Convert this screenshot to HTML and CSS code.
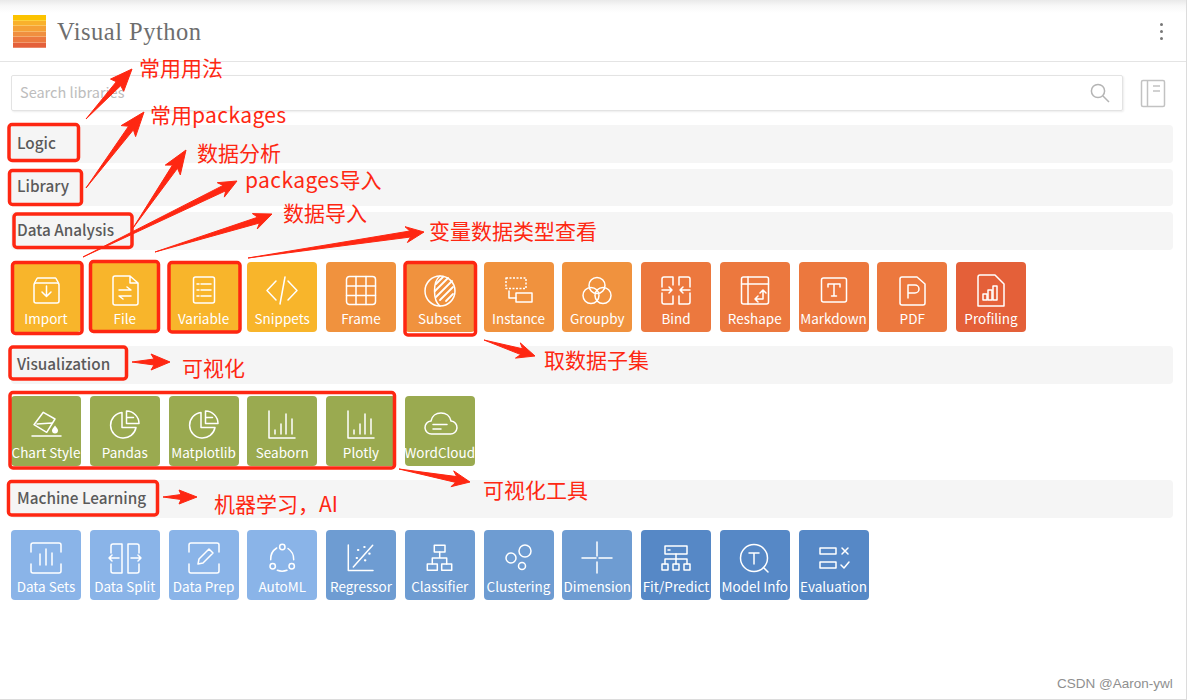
FILE: index.html
```html
<!DOCTYPE html>
<html lang="en">
<head>
<meta charset="utf-8">
<title>Visual Python</title>
<link rel="stylesheet" href="styles.css">
</head>
<body>
<div class="app">
  <header class="topbar">
    <div class="logo"><i class="s1"></i><i class="s2"></i><i class="s3"></i><i class="s4"></i><i class="s5"></i><i class="s6"></i></div>
    <div class="brand">Visual Python</div>
    <div class="kebab"><i></i><i></i><i></i></div>
  </header>
  <main class="content">
    <div class="searchrow">
      <div class="search">
        <input class="search-input" placeholder="Search libraries">
        <svg class="search-ic" width="20" height="20" viewBox="0 0 20 20"><circle cx="8" cy="8" r="6.6"/><path d="M13 13l6 6"/></svg>
      </div>
      <svg class="book" width="26" height="29" viewBox="0 0 26 29"><rect x="1.5" y="1.5" width="23" height="26" rx="1.5"/><path d="M7.5 1.5v26M13 7h7M13 12h7"/></svg>
    </div>

    <div class="bar">Logic</div>
    <div class="bar">Library</div>
    <div class="bar">Data Analysis</div>
    <div class="tiles">
      <div class="tile yellow"><svg class="ic" viewBox="0 0 36 36"><path d="M6.5 11l2.5-4.500a1 1 0 0 1 1-.5h17a1 1 0 0 1 1 .5l2.500 4.500"/><rect x="6" y="11" width="25" height="20" rx="2"/><path d="M18.500 14v10M14 20l4.500 4.500 4.500-4.500"/></svg><span>Import</span></div>
      <div class="tile yellow"><svg class="ic" viewBox="0 0 36 36"><path d="M8 4h15l8 7v20a2 2 0 0 1-2 2H8a2 2 0 0 1-2-2V6a2 2 0 0 1 2-2zM23 4v7h8"/><path d="M12 18h12l-4-3M24 24H12l4 3"/></svg><span>File</span></div>
      <div class="tile yellow"><svg class="ic" viewBox="0 0 36 36"><rect x="7.500" y="5" width="21" height="26" rx="2"/><path d="M11 12h2M15 12h10M11 18h2M15 18h10M11 24h2M15 24h10"/></svg><span>Variable</span></div>
      <div class="tile yellow"><svg class="ic" viewBox="0 0 36 36"><path d="M12 9l-9 9.500 9 9.500M24 9l9 9.500-9 9.500M21 5l-5 27"/></svg><span>Snippets</span></div>
      <div class="tile orange"><svg class="ic" viewBox="0 0 36 36"><rect x="3.500" y="4.500" width="29" height="28" rx="3"/><path d="M13 4.500v28M23 4.500v28M3.500 14h29M3.500 23.500h29"/></svg><span>Frame</span></div>
      <div class="tile orange"><svg class="ic" viewBox="0 0 36 36"><circle cx="18" cy="19" r="15"/><path d="M18 4c-4 3-5.500 9-5.500 15s1.500 12 5.500 15"/><path class="hatch" d="M14 12l7-7M13 19l13-13M14 25L30 9M18 28l13-13M24 29l7-7"/></svg><span>Subset</span></div>
      <div class="tile orange"><svg class="ic" viewBox="0 0 36 36"><rect class="dash" x="5" y="6" width="20" height="10.500"/><rect x="15" y="21" width="16" height="9"/><path d="M8 19v7h7"/></svg><span>Instance</span></div>
      <div class="tile orange"><svg class="ic" viewBox="0 0 36 36"><circle cx="18" cy="13.500" r="8"/><circle cx="12" cy="23.500" r="8"/><circle cx="24" cy="23.500" r="8"/></svg><span>Groupby</span></div>
      <div class="tile deep"><svg class="ic" viewBox="0 0 36 36"><path d="M15 5H6a2 2 0 0 0-2 2v8M4 21v9a2 2 0 0 0 2 2h9v-8M15 5v8M21 5h9a2 2 0 0 1 2 2v8M32 21v9a2 2 0 0 1-2 2h-9v-8M21 5v8M4 18h10M11 15l3 3-3 3M32 18H22M25 15l-3 3 3 3"/></svg><span>Bind</span></div>
      <div class="tile deep"><svg class="ic" viewBox="0 0 36 36"><rect x="4.500" y="5" width="27" height="27" rx="2"/><path d="M4.500 12h27M11 5v27M18 27h8v-9M23 21l3-3 3 3M21 24l-3 3 3 3"/></svg><span>Reshape</span></div>
      <div class="tile deep"><svg class="ic" viewBox="0 0 36 36"><rect x="5.500" y="6" width="25" height="24" rx="2"/><path d="M12 15v-3h12v3M18 12v12M15.500 24h5"/></svg><span>Markdown</span></div>
      <div class="tile deep"><svg class="ic" viewBox="0 0 36 36"><path d="M8 5h15l8 7v19a2 2 0 0 1-2 2H8a2 2 0 0 1-2-2V7a2 2 0 0 1 2-2z"/><path d="M14 26V13h7a3 3 0 0 1 0 8h-7"/></svg><span>PDF</span></div>
      <div class="tile red"><svg class="ic" viewBox="0 0 36 36"><path d="M7 3h15l9 9v22H5V5a2 2 0 0 1 2-2z"/><rect x="10" y="22" width="4" height="6"/><rect x="15" y="18" width="4" height="10"/><rect x="20" y="14" width="4" height="14"/></svg><span>Profiling</span></div>
    </div>

    <div class="bar">Visualization</div>
    <div class="tiles">
      <div class="tile green"><svg class="ic" viewBox="0 0 36 36"><path d="M6 18.700L15.300 6.300 27 13 18.700 26.300zM9 18l15-1"/><path d="M4 30h29"/><path class="solid" d="M27 19.500c-2 2.500-3 3.500-3 5a3 3 0 0 0 6 0c0-1.500-1-2.500-3-5z"/></svg><span>Chart Style</span></div>
      <div class="tile green"><svg class="ic" viewBox="0 0 36 36"><path d="M15 6.500A12.800 12.800 0 1 0 29 21.500H15z"/><path d="M19.500 5v12.500H32A12.500 12.500 0 0 0 19.500 5zM19.500 11.500h7"/></svg><span>Pandas</span></div>
      <div class="tile green"><svg class="ic" viewBox="0 0 36 36"><path d="M15 6.500A12.800 12.800 0 1 0 29 21.500H15z"/><path d="M19.500 5v12.500H32A12.500 12.500 0 0 0 19.500 5zM19.500 11.500h7"/></svg><span>Matplotlib</span></div>
      <div class="tile green"><svg class="ic" viewBox="0 0 36 36"><path d="M5 5v27h26M11 24v4M17 18v10M22 8v20M28 13v15"/></svg><span>Seaborn</span></div>
      <div class="tile green"><svg class="ic" viewBox="0 0 36 36"><path d="M5 5v27h26M11 24v4M17 18v10M22 8v20M28 13v15"/></svg><span>Plotly</span></div>
      <div class="tile green"><svg class="ic" viewBox="0 0 36 36"><path d="M10 28a6.500 6.500 0 0 1-1-13c1-5 5-8 10-8s9 3 10 8a6.500 6.500 0 0 1-1 13z"/><path d="M11 18.500h14M11 23h8"/></svg><span>WordCloud</span></div>
    </div>

    <div class="bar">Machine Learning</div>
    <div class="tiles">
      <div class="tile sky"><svg class="ic" viewBox="0 0 36 36"><path d="M3 12V5a2 2 0 0 1 2-2h26a2 2 0 0 1 2 2v7M3 24v7a2 2 0 0 0 2 2h26a2 2 0 0 0 2-2v-7M12 14v11M18 9v16M24 13v12"/></svg><span>Data Sets</span></div>
      <div class="tile sky"><svg class="ic" viewBox="0 0 36 36"><path d="M4 13V6a2 2 0 0 1 2-2h9v29H6a2 2 0 0 1-2-2v-7M32 13V6a2 2 0 0 0-2-2h-9v29h9a2 2 0 0 0 2-2v-7M2 18h10M5 15l-3 3 3 3M34 18H24M31 15l3 3-3 3"/></svg><span>Data Split</span></div>
      <div class="tile sky"><svg class="ic" viewBox="0 0 36 36"><path d="M3 12V5a2 2 0 0 1 2-2h26a2 2 0 0 1 2 2v7M3 24v7a2 2 0 0 0 2 2h26a2 2 0 0 0 2-2v-7M23 9l4 4-10 10-5 1 1-5z"/></svg><span>Data Prep</span></div>
      <div class="tile sky"><svg class="ic" viewBox="0 0 36 36"><circle cx="18.300" cy="7" r="2.700"/><circle cx="8.700" cy="26.300" r="2.700"/><circle cx="27.700" cy="26.300" r="2.700"/><path d="M6.700 19.700A13 13 0 0 1 12.700 8M29.700 19.700A13 13 0 0 0 24 8.500M13.300 30.300Q18 32 23 30.300"/></svg><span>AutoML</span></div>
      <div class="tile mid"><svg class="ic" viewBox="0 0 36 36"><path d="M5.300 5v25.500H30M10.300 27L29.700 5.300"/><path class="dots" d="M15 10h.3M21.300 7h.3M13.700 18h.3M26.300 13.700h.3M22 20.300h.3"/></svg><span>Regressor</span></div>
      <div class="tile mid"><svg class="ic" viewBox="0 0 36 36"><rect x="12.300" y="5.300" width="10.700" height="6.700"/><rect x="5.300" y="24" width="10" height="6.300"/><rect x="19.700" y="24" width="10" height="6.300"/><path d="M17.700 12v6M10.300 24v-6h14.400v6"/></svg><span>Classifier</span></div>
      <div class="tile mid"><svg class="ic" viewBox="0 0 36 36"><circle cx="24" cy="11" r="6"/><circle cx="10" cy="18" r="5"/><circle cx="21" cy="26" r="3.500"/></svg><span>Clustering</span></div>
      <div class="tile mid"><svg class="ic" viewBox="0 0 36 36"><path d="M18 2v14M18 22v11M3 18h14M20 18h13"/></svg><span>Dimension</span></div>
      <div class="tile blue"><svg class="ic" viewBox="0 0 36 36"><rect x="7" y="6" width="22" height="8"/><path d="M10 10h2M18 14v10M7 24v-5h22v5"/><rect x="4" y="24" width="6" height="6"/><rect x="15" y="24" width="6" height="6"/><rect x="26" y="24" width="6" height="6"/></svg><span>Fit/Predict</span></div>
      <div class="tile blue"><svg class="ic" viewBox="0 0 36 36"><circle cx="17" cy="18" r="13.500"/><path d="M26.500 27.500L31 32M12 13h10M17 13v11"/></svg><span>Model Info</span></div>
      <div class="tile blue"><svg class="ic" viewBox="0 0 36 36"><rect x="4" y="8" width="16" height="6"/><rect x="4" y="22" width="16" height="6"/><path d="M26 8l6 6M32 8l-6 6M25 25l3 3 5-6"/></svg><span>Evaluation</span></div>
    </div>
  </main>

  <svg class="notes" width="1188" height="700" viewBox="0 0 1188 700">
    <g class="arrows">
      <polygon points="86,119 116.300,81.700 110.500,79.100 132,69 123.700,91.300 120.700,85.700"/>
      <polygon points="86,188 128.600,126.200 121.200,125.600 144,112 135.600,136.600 133.400,129.800"/>
      <polygon points="133,228 172.500,165.100 165.300,165.100 186,150 180.300,174.900 177.500,168.300"/>
      <polygon points="83,257 223.100,185.400 217.300,182.700 237,181 224.300,197.100 225.700,190.800"/>
      <polygon points="155,252 257.700,217.200 252.400,213.600 272,214 257.200,229 259.500,223"/>
      <polygon points="248,258 409.800,231 405,226.700 424,232 407.400,242.500 410.600,237"/>
      <polygon points="484,340 522.600,348.800 520.300,342.900 535,356 515.500,358.100 520.800,354.600"/>
      <polygon points="132,362 154,359 151,354 170,362 151,370 154,365"/>
      <polygon points="399,469 456.700,476.600 453.700,470.900 470,482 450.900,486.700 455.700,482.400"/>
      <polygon points="163,497 181,494.500 179,490 197,497 179,504 181,499.500"/>
    </g>
    <g class="boxes">
      <rect x="9" y="124.500" width="69.500" height="36" rx="3"/>
      <rect x="9.500" y="170.500" width="72" height="34" rx="3"/>
      <rect x="14" y="214" width="118" height="33.500" rx="3"/>
      <rect x="12.500" y="262.500" width="69.500" height="71" rx="3"/>
      <rect x="90.500" y="261.500" width="68" height="70" rx="3"/>
      <rect x="169" y="262.500" width="71" height="69.500" rx="3"/>
      <rect x="405" y="262.500" width="70.500" height="72.500" rx="3"/>
      <rect x="10" y="347" width="116.500" height="32" rx="3"/>
      <rect x="10" y="392.500" width="384.500" height="75.500" rx="3"/>
      <rect x="8.500" y="481.500" width="149" height="33.500" rx="3"/>
    </g>
    <g class="labels">
      <text x="139" y="76">常用用法</text>
      <text x="150" y="123">常用<tspan class="latin">packages</tspan></text>
      <text x="197" y="161">数据分析</text>
      <text x="245" y="188"><tspan class="latin">packages</tspan>导入</text>
      <text x="283" y="221">数据导入</text>
      <text x="429" y="239">变量数据类型查看</text>
      <text x="544" y="368">取数据子集</text>
      <text x="182" y="376">可视化</text>
      <text x="483" y="498">可视化工具</text>
      <text x="214" y="512">机器学习，AI</text>
    </g>
    <text class="watermark" x="1057" y="688">CSDN @Aaron-ywl</text>
  </svg>
</div>
</body>
</html>
```
FILE: styles.css
```css
* { box-sizing: border-box; }
html, body { margin: 0; padding: 0; background: #fff; }
.app {
  position: relative;
  width: 1187px;
  height: 700px;
  border-right: 1px solid #dcdcdc;
  border-bottom: 1px solid #dcdcdc;
  overflow: hidden;
  font-family: "Noto Sans CJK KR", "Noto Sans", sans-serif;
}
.topbar {
  height: 62px;
  display: flex;
  align-items: center;
  padding: 2px 0 0 13px;
  border-bottom: 1px solid #e4e4e4;
  background: linear-gradient(#e9e9e9 0, #f8f8f8 6px, #fff 13px);
}
.logo { width: 33px; height: 33px; display: flex; flex-direction: column; }
.logo i { flex: 1; border-bottom: 1px solid rgba(255,255,255,.25); }
.s1 { background: #fcc300; }
.s2 { background: #f9b12c; }
.s3 { background: #f5a136; }
.s4 { background: #f08f3f; }
.s5 { background: #ec793f; }
.s6 { background: #e4603a; }
.brand {
  margin-left: 11px;
  font-family: "Liberation Serif", serif;
  font-size: 24.500px;
  letter-spacing: .5px;
  color: #6e6e6e;
}
.kebab {
  margin-left: auto;
  margin-right: 23px;
  display: flex;
  flex-direction: column;
  gap: 4px;
}
.kebab i { width: 3px; height: 3px; border-radius: 50%; background: #777; }

.content { padding: 13px 13px 0 11px; }
.searchrow { display: flex; align-items: center; margin-bottom: 14px; }
.search {
  width: 1112px;
  height: 36px;
  display: flex;
  align-items: center;
  padding-right: 12px;
  border: 1px solid #e3e3e3;
  border-radius: 2px;
  box-shadow: 1px 1px 2px rgba(0,0,0,.08);
}
.search-input {
  flex: 1;
  height: 100%;
  border: 0;
  outline: 0;
  padding: 0 8px 3px;
  background: transparent;
  font: 14.500px "Noto Sans CJK KR", "Noto Sans", sans-serif;
}
.search-input::placeholder { color: #bdbdbd; opacity: 1; }
.search-ic { fill: none; stroke: #b4b4b4; stroke-width: 1.500; }
.book {
  margin-left: 17px;
  fill: none;
  stroke: #c2c2c2;
  stroke-width: 1.500;
}

.bar {
  height: 37.500px;
  margin-bottom: 6px;
  padding: 0 0 4px 6px;
  display: flex;
  align-items: center;
  background: #f5f5f5;
  border-radius: 4px;
  color: #5a5a5a;
  font-size: 15.300px;
  font-weight: 500;
}
.bar + .tiles { margin-top: 12.500px; }
.tiles { display: flex; gap: 8.750px; margin-bottom: 14px; }
.tile {
  width: 70px;
  height: 70px;
  flex: none;
  border-radius: 4px;
  display: flex;
  flex-direction: column;
  align-items: center;
  padding-top: 10px;
  color: #fff;
}
.tile span {
  height: 20px;
  line-height: 20px;
  font-size: 13.500px;
  white-space: nowrap;
}
.yellow { background: #f8b52b; }
.orange { background: #f0923e; }
.deep { background: #ec783e; }
.red { background: #e46039; }
.green { background: #9aaa50; }
.sky { background: #8ab4e8; }
.mid { background: #6e9cd2; }
.blue { background: #5688c6; }

.ic {
  width: 36px;
  height: 36px;
  flex: none;
  fill: none;
  stroke: #fff;
  stroke-width: 1.500;
  stroke-linecap: round;
  stroke-linejoin: round;
}
.ic .dash { stroke-dasharray: 2 1.500; stroke-linecap: butt; }
.ic .solid { fill: #fff; stroke: none; }
.ic .dots { stroke-width: 2.200; }
.ic .hatch { stroke-width: 1.800; }

.notes { position: absolute; left: 0; top: 0; pointer-events: none; }
.arrows polygon { fill: #fe2712; stroke: #fe2712; stroke-width: 1; stroke-linejoin: round; }
.boxes rect { fill: none; stroke: #fe2712; stroke-width: 3.500; }
.labels text {
  fill: #fe2712;
  font-family: "Noto Sans CJK SC", sans-serif;
  font-size: 21px;
}
.labels .latin { letter-spacing: .4px; }
.watermark {
  fill: #8f8f8f;
  font-family: "Liberation Sans", sans-serif;
  font-size: 13.500px;
}
```
